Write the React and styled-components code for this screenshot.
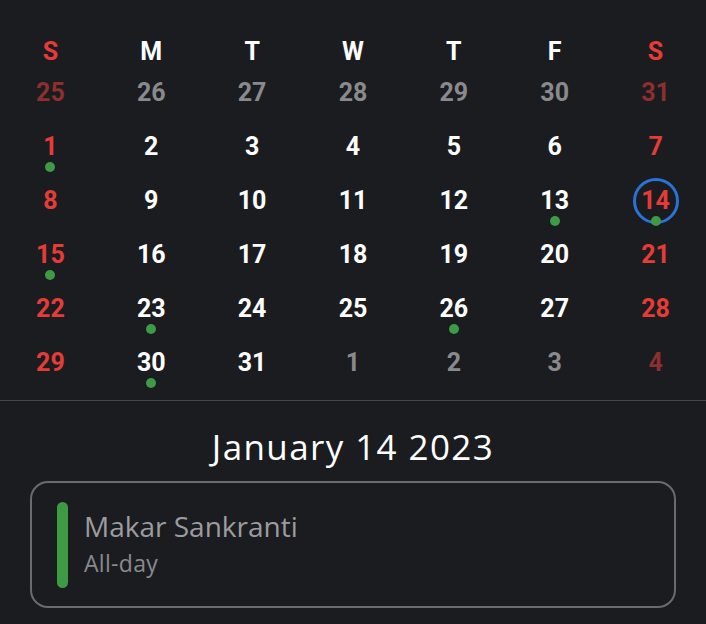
import React from "react";
import styled, { createGlobalStyle } from "styled-components";

const Global = createGlobalStyle`
  html, body { margin: 0; padding: 0; background: #1b1c20; }
  body { width: 706px; height: 624px; overflow: hidden; }
`;

const Page = styled.div`
  width: 706px;
  height: 624px;
  background: #1b1c20;
  display: flex;
  flex-direction: column;
`;

const Grid = styled.div`
  display: grid;
  grid-template-columns: repeat(7, 1fr);
  padding-top: 31px;
  padding-bottom: 5px;
  border-bottom: 1px solid #45464a;
  font-family: Roboto, "Liberation Sans", sans-serif;
  font-weight: 700;
`;

const colors = {
  red: "#e53c38",
  white: "#ffffff",
  dim: "#8a8a8c",
  dimRed: "#8c2f2e",
};

const Head = styled.div`
  height: 40px;
  display: flex;
  align-items: center;
  justify-content: center;
  font-size: 25px;
  color: ${(p) => colors[p.$tone]};
`;

const Cell = styled.div`
  position: relative;
  height: 54px;
  display: flex;
  flex-direction: column;
  align-items: center;
  padding-top: 7px;
  box-sizing: border-box;
`;

const Num = styled.span`
  position: relative;
  height: 30px;
  line-height: 30px;
  font-size: 25px;
  color: ${(p) => colors[p.$tone]};
`;

const Ring = styled.span`
  position: absolute;
  left: 50%;
  top: 7px;
  margin-top: -8px;
  width: 46px;
  height: 46px;
  margin-left: -23px;
  border: 3px solid #2a73d6;
  border-radius: 50%;
  box-sizing: border-box;
`;

const Dot = styled.span`
  position: relative;
  width: 10px;
  height: 10px;
  border-radius: 50%;
  background: #3f9a44;
  visibility: ${(p) => (p.$show ? "visible" : "hidden")};
`;

const Details = styled.div`
  display: flex;
  flex-direction: column;
  align-items: center;
  padding: 26px 30px 0;
  font-family: "Open Sans", Lato, sans-serif;
`;

const DateTitle = styled.div`
  height: 40px;
  line-height: 40px;
  font-size: 35px;
  letter-spacing: 1.4px;
  color: #ffffff;
`;

const Card = styled.div`
  margin-top: 14px;
  align-self: stretch;
  height: 127px;
  box-sizing: border-box;
  border: 2px solid #6a6b6f;
  border-radius: 18px;
  display: flex;
  align-items: center;
  padding: 0 0 0 25px;
  gap: 16px;
`;

const Bar = styled.div`
  width: 11px;
  height: 86px;
  border-radius: 6px;
  background: #3f9a44;
`;

const EventText = styled.div`
  display: flex;
  flex-direction: column;
  margin-bottom: 4px;
`;

const EventTitle = styled.div`
  font-size: 28px;
  line-height: 34px;
  color: #9c9c9e;
`;

const EventSub = styled.div`
  margin-top: 7px;
  font-size: 23px;
  line-height: 26px;
  letter-spacing: 0.3px;
  color: #8a8a8c;
`;

const heads = ["S", "M", "T", "W", "T", "F", "S"];

const weeks = [
  [25, 26, 27, 28, 29, 30, 31],
  [1, 2, 3, 4, 5, 6, 7],
  [8, 9, 10, 11, 12, 13, 14],
  [15, 16, 17, 18, 19, 20, 21],
  [22, 23, 24, 25, 26, 27, 28],
  [29, 30, 31, 1, 2, 3, 4],
];

const dots = new Set(["1-0", "2-5", "2-6", "3-0", "4-1", "4-4", "5-1"]);

function tone(w, d) {
  const weekend = d === 0 || d === 6;
  const outside = w === 0 || (w === 5 && d >= 3);
  if (outside) return weekend ? "dimRed" : "dim";
  return weekend ? "red" : "white";
}

export default function App() {
  return (
    <Page>
      <Global />
      <Grid>
        {heads.map((h, i) => (
          <Head key={"h" + i} $tone={i === 0 || i === 6 ? "red" : "white"}>
            {h}
          </Head>
        ))}
        {weeks.map((week, w) =>
          week.map((n, d) => (
            <Cell key={w + "-" + d}>
              {w === 2 && d === 6 && <Ring />}
              <Num $tone={tone(w, d)}>{n}</Num>
              <Dot $show={dots.has(w + "-" + d)} />
            </Cell>
          ))
        )}
      </Grid>
      <Details>
        <DateTitle>January 14 2023</DateTitle>
        <Card>
          <Bar />
          <EventText>
            <EventTitle>Makar Sankranti</EventTitle>
            <EventSub>All-day</EventSub>
          </EventText>
        </Card>
      </Details>
    </Page>
  );
}
